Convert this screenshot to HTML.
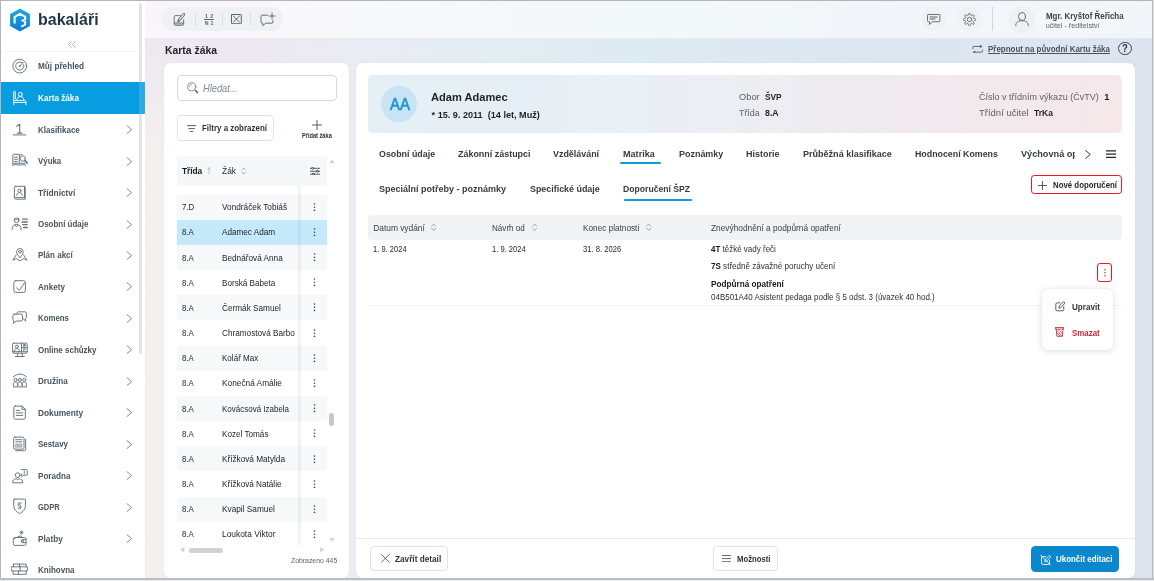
<!DOCTYPE html>
<html lang="cs"><head><meta charset="utf-8"><title>Karta žáka</title>
<style>
*{box-sizing:border-box;margin:0;padding:0}
html,body{width:1154px;height:581px;overflow:hidden}
body{font-family:"Liberation Sans",sans-serif;color:#2b2f33;font-size:11px;position:relative;background:#fff}
.abs{position:absolute}
.t{position:absolute;white-space:nowrap;line-height:0;transform-origin:0 50%}
.t>i{display:inline-block;width:0;height:20px}
.panel{position:absolute;background:#fff;border-radius:7px;box-shadow:0 0 2px rgba(120,120,160,.10)}
.btn{position:absolute;border:1px solid #dfe2e6;border-radius:4px;background:#fff}
</style></head><body>
<div id="root" style="position:absolute;left:0;top:0;width:1154px;height:581px;will-change:transform">

<div class="abs" style="left:145px;top:0px;width:1009.00px;height:581.00px;background:radial-gradient(ellipse 330px 150px at 0px 10px,rgba(235,230,242,.95),rgba(235,230,242,0)),linear-gradient(90deg,#f5efee 0%,#f1ebf0 10%,#e8eef4 21%,#ddebf2 48%,#dce7f1 70%,#dde4f0 100%);"></div>
<div class="abs" style="left:1px;top:1px;width:144.20px;height:578.00px;background:#fff;"></div>
<div class="abs" style="left:3px;top:51px;width:134.00px;height:0.80px;background:#f3f3f5;"></div>
<div class="abs" style="left:1px;top:82px;width:138.00px;height:31.70px;background:#079de0;"></div>
<div class="abs" style="left:139px;top:82px;width:6.20px;height:31.70px;background:#2fa9e3;"></div>
<svg class="abs" style="left:9.300px;top:7.500px;width:22px;height:24.300px" viewBox="0 0 22 25" preserveAspectRatio="none"><defs><linearGradient id="lg" x1="0" y1="0" x2="0" y2="1"><stop offset="0" stop-color="#25a8e6"/><stop offset="1" stop-color="#0a7ccf"/></linearGradient></defs><path d="M11 .6 L20.900 6.300 V18.500 L11 24.200 L1.100 18.500 V6.300 Z" fill="url(#lg)"/><path d="M5.600 16 V9.200 L11 6.100 L16.200 9 V11.600 L13.800 12.900 L16.200 14.200 V17 L12.300 19.200" fill="none" stroke="#fff" stroke-width="2" stroke-linejoin="miter" stroke-linecap="butt"/></svg>
<div class="t" style="left:37.70px;top:5.30px;font-size:17.1px;color:#1d3546;font-weight:bold;transform:scaleX(0.9375);"><i></i>bakaláři</div>
<svg class="abs" style="left:68.3px;top:40.9px;width:8px;height:7px" viewBox="0 0 8 7" fill="none" stroke="#9aa1a8" stroke-width="0.8" stroke-linecap="round" stroke-linejoin="round" ><path d="M3.300 .5 L.6 3.500 L3.300 6.500 M7.300 .5 L4.600 3.500 L7.300 6.500"/></svg>
<svg class="abs" style="left:11px;top:56.40px;width:18px;height:18px" viewBox="0 0 18 18" fill="none" stroke="#64727c" stroke-width=".95" stroke-linecap="round" stroke-linejoin="round"><circle cx="8.750" cy="10.100" r="6.900"/><path d="M11.400 6.850 A4.100 4.100 0 1 0 12.700 8.750"/><path d="M8.750 10.100 L12.300 6.550"/><circle cx="8.750" cy="10.100" r=".9" fill="#64727c" stroke="none"/></svg>
<div class="t" style="left:38.20px;top:49.40px;font-size:8.8px;color:#48545e;font-weight:bold;transform:scaleX(0.9315);"><i></i>Můj přehled</div>
<svg class="abs" style="left:11px;top:88.08px;width:18px;height:18px" viewBox="0 0 18 18" fill="none" stroke="#fff" stroke-width=".95" stroke-linecap="round" stroke-linejoin="round"><path d="M2.700 12.600 V4 a.8 .8 0 0 1 1.600 0 V11"/><circle cx="9.400" cy="6.300" r="2"/><path d="M5.900 12.400 c0-2.600 1.300-3.800 3.500-3.800 s3.500 1.200 3.500 3.800"/><path d="M2.700 16.700 V13.800 a1.200 1.200 0 0 1 1.200-1.200 H13.700 a1.200 1.200 0 0 1 1.200 1.200 V16.700 M2.700 14.500 H14.900"/></svg>
<div class="t" style="left:38.20px;top:81.08px;font-size:8.8px;color:#fff;font-weight:bold;transform:scaleX(0.9313);"><i></i>Karta žáka</div>
<svg class="abs" style="left:11px;top:119.56px;width:18px;height:18px" viewBox="0 0 18 18" fill="none" stroke="#64727c" stroke-width=".95" stroke-linecap="round" stroke-linejoin="round"><path d="M5.600 6.400 L8.700 4.100 V13 M6.300 13.100 H11" stroke-width="1.050"/><path d="M2.300 14.900 H14.900"/></svg>
<div class="t" style="left:38.20px;top:112.56px;font-size:8.8px;color:#48545e;font-weight:bold;transform:scaleX(0.9090);"><i></i>Klasifikace</div>
<svg class="abs" style="left:126.1px;top:125.06px;width:6.5px;height:9.2px" viewBox="0 0 6.500 9.200" fill="none" stroke="#717c86" stroke-width="0.9" stroke-linecap="round" stroke-linejoin="round" ><path d="M1 .7 L5.600 4.600 L1 8.500"/></svg>
<svg class="abs" style="left:11px;top:151.04px;width:18px;height:18px" viewBox="0 0 18 18" fill="none" stroke="#64727c" stroke-width=".95" stroke-linecap="round" stroke-linejoin="round"><path d="M1.900 12.700 V4.100 a.8 .8 0 0 1 .8-.8 H8.300 V12.700 M3.600 6.200 h2.800 M3.600 8.300 h2.800 M3.600 10.400 h2.800 M8.300 4.400 c.9-.7 1.800-1 2.900-.9 M1.900 12.700 c2.200-.8 4.200-.8 6.400 0 c1.700-.7 3.600-.8 5.600-.1 M1.500 14.300 c2.200-.9 4.600-.9 6.800 0 c2.200-.9 4.400-.9 6.400 0"/><circle cx="11.700" cy="7.500" r="2.700"/><path d="M13.800 9.600 L16.100 11.900" stroke-width="1.700"/></svg>
<div class="t" style="left:38.20px;top:144.04px;font-size:8.8px;color:#48545e;font-weight:bold;transform:scaleX(0.8948);"><i></i>Výuka</div>
<svg class="abs" style="left:126.1px;top:156.54px;width:6.5px;height:9.2px" viewBox="0 0 6.500 9.200" fill="none" stroke="#717c86" stroke-width="0.9" stroke-linecap="round" stroke-linejoin="round" ><path d="M1 .7 L5.600 4.600 L1 8.500"/></svg>
<svg class="abs" style="left:11px;top:182.52px;width:18px;height:18px" viewBox="0 0 18 18" fill="none" stroke="#64727c" stroke-width=".95" stroke-linecap="round" stroke-linejoin="round"><rect x="3.400" y="3.300" width="10.900" height="11.300" rx="1"/><path d="M3.400 13.200 v1.400 a1.600 1.600 0 0 0 1.600 1.600 H14.300 v-2 M13.500 3.500 v11"/><circle cx="8.500" cy="7.700" r="1.600"/><path d="M5.700 12.300 c0-1.900 1.200-2.700 2.800-2.700 s2.800 .8 2.800 2.700"/></svg>
<div class="t" style="left:38.20px;top:175.52px;font-size:8.8px;color:#48545e;font-weight:bold;transform:scaleX(0.9393);"><i></i>Třídnictví</div>
<svg class="abs" style="left:126.1px;top:188.02px;width:6.5px;height:9.2px" viewBox="0 0 6.500 9.200" fill="none" stroke="#717c86" stroke-width="0.9" stroke-linecap="round" stroke-linejoin="round" ><path d="M1 .7 L5.600 4.600 L1 8.500"/></svg>
<svg class="abs" style="left:11px;top:214.00px;width:18px;height:18px" viewBox="0 0 18 18" fill="none" stroke="#64727c" stroke-width=".95" stroke-linecap="round" stroke-linejoin="round"><circle cx="5.600" cy="6.300" r="2.400"/><path d="M3.300 5.700 c1.500 .3 3 0 4.500-1.200 M1.100 15.500 c0-3.400 1.600-5 4.500-5 s4.500 1.600 4.500 5 M4.100 10.900 l1.500 2 1.500-2"/><path d="M11.700 5.200 h4.500 M11 8 h5.200 M11.700 10.700 h4.500 M12.600 13.500 h3.600" stroke-width="1.300"/></svg>
<div class="t" style="left:38.20px;top:207.00px;font-size:8.8px;color:#48545e;font-weight:bold;transform:scaleX(0.9042);"><i></i>Osobní údaje</div>
<svg class="abs" style="left:126.1px;top:219.5px;width:6.5px;height:9.2px" viewBox="0 0 6.500 9.200" fill="none" stroke="#717c86" stroke-width="0.9" stroke-linecap="round" stroke-linejoin="round" ><path d="M1 .7 L5.600 4.600 L1 8.500"/></svg>
<svg class="abs" style="left:11px;top:245.48px;width:18px;height:18px" viewBox="0 0 18 18" fill="none" stroke="#64727c" stroke-width=".95" stroke-linecap="round" stroke-linejoin="round"><path d="M8.900 12.500 c-2.300-2.500-3.300-4.100-3.300-5.700 a3.300 3.300 0 0 1 6.600 0 c0 1.600-1 3.200-3.300 5.700z"/><circle cx="8.900" cy="6.700" r="1.300"/><path d="M5.200 9.900 L1.900 15.300 L5.200 13.600 L8.900 15.900 L12.600 13.600 L15.900 15.300 L12.600 9.900"/></svg>
<div class="t" style="left:38.20px;top:238.48px;font-size:8.8px;color:#48545e;font-weight:bold;transform:scaleX(0.9120);"><i></i>Plán akcí</div>
<svg class="abs" style="left:126.1px;top:250.98px;width:6.5px;height:9.2px" viewBox="0 0 6.500 9.200" fill="none" stroke="#717c86" stroke-width="0.9" stroke-linecap="round" stroke-linejoin="round" ><path d="M1 .7 L5.600 4.600 L1 8.500"/></svg>
<svg class="abs" style="left:11px;top:276.96px;width:18px;height:18px" viewBox="0 0 18 18" fill="none" stroke="#64727c" stroke-width=".95" stroke-linecap="round" stroke-linejoin="round"><rect x="2.800" y="3.700" width="11.600" height="11.700" rx="1.900"/><path d="M5.500 10.800 L8.300 13.300 L13.600 5.700"/></svg>
<div class="t" style="left:38.20px;top:269.96px;font-size:8.8px;color:#48545e;font-weight:bold;transform:scaleX(0.9167);"><i></i>Ankety</div>
<svg class="abs" style="left:126.1px;top:282.46px;width:6.5px;height:9.2px" viewBox="0 0 6.500 9.200" fill="none" stroke="#717c86" stroke-width="0.9" stroke-linecap="round" stroke-linejoin="round" ><path d="M1 .7 L5.600 4.600 L1 8.500"/></svg>
<svg class="abs" style="left:11px;top:308.44px;width:18px;height:18px" viewBox="0 0 18 18" fill="none" stroke="#64727c" stroke-width=".95" stroke-linecap="round" stroke-linejoin="round"><path d="M3.500 6.100 h6.400 a1.600 1.600 0 0 1 1.600 1.600 v3.700 a1.600 1.600 0 0 1 -1.600 1.600 h-4.800 l-2.600 2.400 .5-2.500 a1.600 1.600 0 0 1 -1.100-1.500 v-3.700 a1.600 1.600 0 0 1 1.600-1.600z"/><path d="M5.900 5.900 v-.5 a1.600 1.600 0 0 1 1.600-1.600 h6.300 a1.600 1.600 0 0 1 1.600 1.600 v3.700 a1.600 1.600 0 0 1 -1.100 1.500 l.4 2.400 -2.600-2.300 h-.5"/></svg>
<div class="t" style="left:38.20px;top:301.44px;font-size:8.8px;color:#48545e;font-weight:bold;transform:scaleX(0.8929);"><i></i>Komens</div>
<svg class="abs" style="left:126.1px;top:313.94px;width:6.5px;height:9.2px" viewBox="0 0 6.500 9.200" fill="none" stroke="#717c86" stroke-width="0.9" stroke-linecap="round" stroke-linejoin="round" ><path d="M1 .7 L5.600 4.600 L1 8.500"/></svg>
<svg class="abs" style="left:11px;top:339.92px;width:18px;height:18px" viewBox="0 0 18 18" fill="none" stroke="#64727c" stroke-width=".95" stroke-linecap="round" stroke-linejoin="round"><rect x="1.600" y="3.200" width="14.600" height="10" rx="1"/><path d="M1.600 11.700 H16.200 M6.900 13.200 l-.7 3.300 M10.900 13.200 l.7 3.300 M4.400 16.500 h9 M10.500 3.200 V11.700 M10.500 7.600 H16.200"/><circle cx="5.900" cy="6.600" r="1.500"/><path d="M3.400 11.600 c0-2.100 1-3 2.500-3 s2.500 .9 2.500 3 M12.900 4.600 v2 M12.900 4.600 h1.600 v1.200 h-1.600 M12.900 9 v1.700 M12.900 9 h1.600"/></svg>
<div class="t" style="left:38.20px;top:332.92px;font-size:8.8px;color:#48545e;font-weight:bold;transform:scaleX(0.9062);"><i></i>Online schůzky</div>
<svg class="abs" style="left:126.1px;top:345.42px;width:6.5px;height:9.2px" viewBox="0 0 6.500 9.200" fill="none" stroke="#717c86" stroke-width="0.9" stroke-linecap="round" stroke-linejoin="round" ><path d="M1 .7 L5.600 4.600 L1 8.500"/></svg>
<svg class="abs" style="left:11px;top:371.40px;width:18px;height:18px" viewBox="0 0 18 18" fill="none" stroke="#64727c" stroke-width=".95" stroke-linecap="round" stroke-linejoin="round"><path d="M2.300 5.800 Q8.900 -.1 15.500 5.800"/><circle cx="4.500" cy="8.800" r="1.500"/><circle cx="8.900" cy="8.800" r="1.500"/><circle cx="13.300" cy="8.800" r="1.500"/><path d="M2.400 14.800 v-1.700 c0-1.500 .9-2.200 2.100-2.200 s2.100 .7 2.100 2.200 v1.700 M6.800 14.800 v-1.700 c0-1.500 .9-2.200 2.100-2.200 s2.100 .7 2.100 2.200 v1.700 M11.200 14.800 v-1.700 c0-1.500 .9-2.200 2.100-2.200 s2.100 .7 2.100 2.200 v1.700 M2.300 15.900 H15.500"/></svg>
<div class="t" style="left:38.20px;top:364.40px;font-size:8.8px;color:#48545e;font-weight:bold;transform:scaleX(0.9200);"><i></i>Družina</div>
<svg class="abs" style="left:126.1px;top:376.9px;width:6.5px;height:9.2px" viewBox="0 0 6.500 9.200" fill="none" stroke="#717c86" stroke-width="0.9" stroke-linecap="round" stroke-linejoin="round" ><path d="M1 .7 L5.600 4.600 L1 8.500"/></svg>
<svg class="abs" style="left:11px;top:402.88px;width:18px;height:18px" viewBox="0 0 18 18" fill="none" stroke="#64727c" stroke-width=".95" stroke-linecap="round" stroke-linejoin="round"><path d="M4.300 3.100 h6.700 l3.300 3.300 v8.300 a1.500 1.500 0 0 1 -1.500 1.500 h-8.500 a1.500 1.500 0 0 1 -1.500-1.500 v-10.100 a1.500 1.500 0 0 1 1.500-1.500z M11 3.100 v3.300 h3.300 M5.200 7.400 h3.500 M5.200 9.900 h6.600 M5.200 12.400 h6.600"/></svg>
<div class="t" style="left:38.20px;top:395.88px;font-size:8.8px;color:#48545e;font-weight:bold;transform:scaleX(0.9432);"><i></i>Dokumenty</div>
<svg class="abs" style="left:126.1px;top:408.38px;width:6.5px;height:9.2px" viewBox="0 0 6.500 9.200" fill="none" stroke="#717c86" stroke-width="0.9" stroke-linecap="round" stroke-linejoin="round" ><path d="M1 .7 L5.600 4.600 L1 8.500"/></svg>
<svg class="abs" style="left:11px;top:434.36px;width:18px;height:18px" viewBox="0 0 18 18" fill="none" stroke="#64727c" stroke-width=".95" stroke-linecap="round" stroke-linejoin="round"><rect x="2.700" y="3.100" width="10.300" height="12.100" rx="1.300"/><path d="M14.700 5.300 v10.100 a1.300 1.300 0 0 1 -1.300 1.300 h-8.600 M4.800 5.700 h2.600 M8.300 5.700 h2.600 M4.800 7.800 h2.600 M8.300 7.800 h2.600"/><path d="M4.900 10 h2.400 v3.200 h-2.400z M8.400 10 h2.400 v3.200 h-2.400z" fill="#64727c" fill-opacity=".35" stroke-width=".5"/></svg>
<div class="t" style="left:38.20px;top:427.36px;font-size:8.8px;color:#48545e;font-weight:bold;transform:scaleX(0.9017);"><i></i>Sestavy</div>
<svg class="abs" style="left:126.1px;top:439.86px;width:6.5px;height:9.2px" viewBox="0 0 6.500 9.200" fill="none" stroke="#717c86" stroke-width="0.9" stroke-linecap="round" stroke-linejoin="round" ><path d="M1 .7 L5.600 4.600 L1 8.500"/></svg>
<svg class="abs" style="left:11px;top:465.84px;width:18px;height:18px" viewBox="0 0 18 18" fill="none" stroke="#64727c" stroke-width=".95" stroke-linecap="round" stroke-linejoin="round"><circle cx="6.700" cy="9.200" r="2.400"/><path d="M1.600 16.400 c0-2.300 1.200-3.300 3.500-3.600 l1.600 .8 1.600-.8 c2.300 .3 3.500 1.300 3.500 3.600z M10.300 3.500 h5 a1 1 0 0 1 1 1 v3.700 a1 1 0 0 1 -1 1 h-2.600 l-1.900 1.500 v-2.800 M13.300 5 v1.700 M13.300 7.800 v.1"/></svg>
<div class="t" style="left:38.20px;top:458.84px;font-size:8.8px;color:#48545e;font-weight:bold;transform:scaleX(0.9202);"><i></i>Poradna</div>
<svg class="abs" style="left:126.1px;top:471.34px;width:6.5px;height:9.2px" viewBox="0 0 6.500 9.200" fill="none" stroke="#717c86" stroke-width="0.9" stroke-linecap="round" stroke-linejoin="round" ><path d="M1 .7 L5.600 4.600 L1 8.500"/></svg>
<svg class="abs" style="left:11px;top:497.32px;width:18px;height:18px" viewBox="0 0 18 18" fill="none" stroke="#64727c" stroke-width=".95" stroke-linecap="round" stroke-linejoin="round"><path d="M3.400 2.100 h10.400 a.7 .7 0 0 1 .7 .7 v5.700 c0 3.900-2.500 6.300-5.900 8.100 c-3.400-1.800-5.900-4.200-5.900-8.100 v-5.700 a.7 .7 0 0 1 .7-.7z"/><path d="M10.200 6.300 c-.3-1.100-2.900-1.200-2.900 .3 c0 1.700 3 1.300 3 3 c0 1.100-1.500 1.400-2.400 .8 M7 11.100 c.3 1.100 2.900 1.200 2.900-.3 c0-1.700-3-1.300-3-3 c0-1.100 1.500-1.400 2.400-.8" stroke-width=".8"/></svg>
<div class="t" style="left:38.20px;top:490.32px;font-size:8.8px;color:#48545e;font-weight:bold;transform:scaleX(0.8535);"><i></i>GDPR</div>
<svg class="abs" style="left:126.1px;top:502.82px;width:6.5px;height:9.2px" viewBox="0 0 6.500 9.200" fill="none" stroke="#717c86" stroke-width="0.9" stroke-linecap="round" stroke-linejoin="round" ><path d="M1 .7 L5.600 4.600 L1 8.500"/></svg>
<svg class="abs" style="left:11px;top:528.80px;width:18px;height:18px" viewBox="0 0 18 18" fill="none" stroke="#64727c" stroke-width=".95" stroke-linecap="round" stroke-linejoin="round"><path d="M2.300 10.200 a1.700 1.700 0 0 1 1.700-1.700 h9.500 a1.500 1.500 0 0 1 1.500 1.500 v4.900 a1.500 1.500 0 0 1 -1.500 1.500 h-9.700 a1.500 1.500 0 0 1 -1.500-1.500z M2.500 9.600 L9.800 6.800 l1.200 1.700 M15 10.500 h-3.200 a1.600 1.600 0 0 0 0 3.200 h3.200"/><circle cx="11.900" cy="12.100" r=".5"/><path d="M10.500 1.800 v3.400 M8.800 3.500 h3.400 M9.300 2.300 l2.400 2.400 M11.700 2.300 l-2.400 2.400" stroke-width=".7"/></svg>
<div class="t" style="left:38.20px;top:521.80px;font-size:8.8px;color:#48545e;font-weight:bold;transform:scaleX(0.9391);"><i></i>Platby</div>
<svg class="abs" style="left:126.1px;top:534.3px;width:6.5px;height:9.2px" viewBox="0 0 6.500 9.200" fill="none" stroke="#717c86" stroke-width="0.9" stroke-linecap="round" stroke-linejoin="round" ><path d="M1 .7 L5.600 4.600 L1 8.500"/></svg>
<svg class="abs" style="left:11px;top:560.28px;width:18px;height:18px" viewBox="0 0 18 18" fill="none" stroke="#64727c" stroke-width=".95" stroke-linecap="round" stroke-linejoin="round"><path d="M2.500 4.100 H15.200 V6.800 M2.500 4.100 V6.800 M8.500 4.100 V6.800 M.8 6.800 H16.100 L16.600 8.900 L16.100 11 H.8 L.3 8.900z M9.200 6.800 V11 M2.100 11 V14.300 H15.200 V11 M7.400 11 V14.300"/></svg>
<div class="t" style="left:38.20px;top:553.28px;font-size:8.8px;color:#48545e;font-weight:bold;transform:scaleX(0.9104);"><i></i>Knihovna</div>
<div class="abs" style="left:139.1px;top:3px;width:3.20px;height:79.00px;background:#e2e3e5;border-radius:1.600px 1.600px 0 0"></div>
<div class="abs" style="left:139.1px;top:113.7px;width:3.20px;height:240.30px;background:#e2e3e5;border-radius:0 0 1.600px 1.600px"></div>
<div class="abs" style="left:145.2px;top:1px;width:1006.80px;height:37.60px;background:rgba(255,255,255,.64);border-bottom:1px solid rgba(214,220,230,.55)"></div>
<div class="abs" style="left:161.7px;top:6.9px;width:121.50px;height:24.50px;background:#f0f1f4;border-radius:12.500px"></div>
<svg class="abs" style="left:172.5px;top:12px;width:13px;height:14.8px" viewBox="0 0 14 16" fill="none" stroke="#5d656c" stroke-width="0.95" stroke-linecap="round" stroke-linejoin="round" ><path d="M7.800 3.900 H2.500 a1.200 1.200 0 0 0 -1.200 1.200 V13.200 a1.200 1.200 0 0 0 1.200 1.200 H10.300 a1.200 1.200 0 0 0 1.200-1.200 V8.300 M1.300 11.900 H11.500"/><path d="M1.800 12.400 H11 V13.900 H1.800z" fill="#5d656c" fill-opacity=".45" stroke="none"/><path d="M6.400 8.900 L11.700 2.600" stroke-width="3" stroke-linecap="round"/><path d="M6.400 8.900 L11.700 2.600" stroke="#f1f2f5" stroke-width="1.200" stroke-linecap="round"/><path d="M4.900 10.500 l.5-2 1.500 1.400z" fill="#5d656c" stroke-width=".5"/></svg>
<div class="abs" style="left:195px;top:11.5px;width:0.80px;height:14.50px;background:#dcdfe4;"></div>
<div class="t" style="left:204.90px;top:-1.90px;font-size:5.3px;color:#5d656c;font-weight:bold;letter-spacing:2.4px;"><i></i>12</div>
<div class="abs" style="left:203.6px;top:19px;width:10.40px;height:0.80px;background:#5d656c;"></div>
<div class="t" style="left:204.70px;top:4.90px;font-size:5.3px;color:#5d656c;font-weight:bold;letter-spacing:1.9px;"><i></i>N1</div>
<div class="abs" style="left:222.2px;top:11.5px;width:0.80px;height:14.50px;background:#dcdfe4;"></div>
<svg class="abs" style="left:231px;top:13.8px;width:10.8px;height:10.2px" viewBox="0 0 10.800 10.200" fill="none" stroke="#5d656c" stroke-width="1" stroke-linecap="round" stroke-linejoin="round" ><rect x=".5" y=".5" width="9.800" height="9.200" rx=".4"/><path d="M2.300 2.100 L8.500 8.100 M8.500 2.100 L2.300 8.100"/></svg>
<div class="abs" style="left:250.1px;top:11.5px;width:0.80px;height:14.50px;background:#dcdfe4;"></div>
<svg class="abs" style="left:259.5px;top:11.5px;width:16px;height:15px" viewBox="0 0 16 15" fill="none" stroke="#5d656c" stroke-width="0.95" stroke-linecap="round" stroke-linejoin="round" ><path d="M7.500 3.200 H2.200 a1.200 1.200 0 0 0 -1.200 1.200 v5.600 a1.200 1.200 0 0 0 1.200 1.200 h.6 v2.500 l2.900-2.500 h6.100 a1.200 1.200 0 0 0 1.200-1.200 V8.500 M12 1 v6 M9 4 h6"/></svg>
<div class="abs" style="left:922px;top:6.6px;width:24.20px;height:24.20px;background:#f0f1f3;border-radius:13px"></div>
<svg class="abs" style="left:927.3px;top:13.9px;width:13.4px;height:11px" viewBox="0 0 13.400 11" fill="none" stroke="#5d656c" stroke-width="0.9" stroke-linecap="round" stroke-linejoin="round" ><path d="M1.300 .5 h10.800 a.8 .8 0 0 1 .8 .8 v5.600 a.8 .8 0 0 1 -.8 .8 h-6.600 l-3 2.800 v-2.800 h-1.200 a.8 .8 0 0 1 -.8-.8 v-5.600 a.8 .8 0 0 1 .8-.8z"/><path d="M3 3 h7.200 M3 5 h5" stroke-width="1.200"/></svg>
<div class="abs" style="left:956.8px;top:6.6px;width:24.60px;height:24.20px;background:#f0f1f3;border-radius:13px"></div>
<svg class="abs" style="left:962.8px;top:12.7px;width:13px;height:13px" viewBox="0 0 13 13" fill="none" stroke="#5d656c" stroke-width="0.9" stroke-linecap="round" stroke-linejoin="round" ><circle cx="6.500" cy="6.500" r="2.200"/><path d="M6.50 0.30 L6.91 0.31 L7.28 0.54 L7.52 1.35 L7.66 2.16 L7.88 2.43 L8.15 2.53 L8.40 2.64 L8.74 2.61 L9.42 2.13 L10.16 1.73 L10.59 1.84 L10.88 2.12 L11.16 2.41 L11.27 2.84 L10.87 3.58 L10.39 4.25 L10.36 4.60 L10.47 4.85 L10.57 5.12 L10.84 5.34 L11.65 5.48 L12.46 5.72 L12.69 6.09 L12.70 6.50 L12.69 6.91 L12.46 7.28 L11.65 7.52 L10.84 7.66 L10.57 7.88 L10.47 8.15 L10.36 8.40 L10.39 8.74 L10.87 9.42 L11.27 10.16 L11.16 10.59 L10.88 10.88 L10.59 11.16 L10.16 11.27 L9.42 10.87 L8.74 10.39 L8.40 10.36 L8.15 10.47 L7.88 10.57 L7.66 10.84 L7.52 11.65 L7.28 12.46 L6.91 12.69 L6.50 12.70 L6.09 12.69 L5.72 12.46 L5.48 11.65 L5.34 10.84 L5.12 10.57 L4.85 10.47 L4.60 10.36 L4.26 10.39 L3.58 10.87 L2.84 11.27 L2.41 11.16 L2.12 10.88 L1.84 10.59 L1.73 10.16 L2.13 9.42 L2.61 8.75 L2.64 8.40 L2.53 8.15 L2.43 7.88 L2.16 7.66 L1.35 7.52 L0.54 7.28 L0.31 6.91 L0.30 6.50 L0.31 6.09 L0.54 5.72 L1.35 5.48 L2.16 5.34 L2.43 5.12 L2.53 4.85 L2.64 4.60 L2.61 4.25 L2.13 3.58 L1.73 2.84 L1.84 2.41 L2.12 2.12 L2.41 1.84 L2.84 1.73 L3.58 2.13 L4.25 2.61 L4.60 2.64 L4.85 2.53 L5.12 2.43 L5.34 2.16 L5.48 1.35 L5.72 0.54 L6.09 0.31z"/></svg>
<div class="abs" style="left:991.6px;top:6.6px;width:0.90px;height:24.90px;background:#d3d7dc;"></div>
<div class="abs" style="left:1009px;top:5.5px;width:26.40px;height:27.10px;background:#eff0f2;border-radius:14px"></div>
<svg class="abs" style="left:1014.9px;top:12.1px;width:14px;height:14px" viewBox="0 0 14 14" fill="none" stroke="#5d656c" stroke-width="0.95" stroke-linecap="round" stroke-linejoin="round" ><ellipse cx="7" cy="4.500" rx="3.500" ry="3.900"/><path d="M.7 13.700 c0-3.600 2.700-5 6.300-5 s6.300 1.400 6.300 5"/></svg>
<div class="t" style="left:1045.70px;top:-0.70px;font-size:9.2px;color:#3c4348;font-weight:bold;transform:scaleX(0.8635);"><i></i>Mgr. Kryštof Řeřicha</div>
<div class="t" style="left:1045.70px;top:8.20px;font-size:7.2px;color:#5b6369;"><i></i>učitel - ředitelství</div>
<div class="t" style="left:164.50px;top:33.70px;font-size:10.5px;color:#1e2226;font-weight:bold;transform:scaleX(0.9899);"><i></i>Karta žáka</div>
<svg class="abs" style="left:971.8px;top:44.5px;width:11.4px;height:8.6px" viewBox="0 0 11 8.500" fill="none" stroke="#4f575d" stroke-width="0.85" stroke-linecap="round" stroke-linejoin="round" ><path d="M.6 3.500 v-.8 a1.300 1.300 0 0 1 1.300-1.300 h7.600 M8 .4 l1.700 1 -1.700 1 M10.400 5 v.8 a1.300 1.300 0 0 1 -1.300 1.300 h-7.600 M3 6.100 l-1.700 1 1.700 1"/></svg>
<div class="t" style="left:988.00px;top:31.60px;font-size:8.6px;color:#4a5258;font-weight:bold;transform:scaleX(0.9251);text-decoration:underline;text-decoration-thickness:.7px;text-underline-offset:.6px"><i></i>Přepnout na původní Kartu žáka</div>
<div class="abs" style="left:1117.900px;top:41.600px;width:13.800px;height:13.800px;border-radius:7px;border:1px solid #3a4046"></div>
<div class="t" style="left:1121.90px;top:32.40px;font-size:10.3px;color:#2e3338;font-weight:bold;transform:scaleX(0.9218);"><i></i>?</div>
<div class="panel" style="left:164.300px;top:62.500px;width:184.800px;height:515.300px"></div>
<div class="abs" style="left:177px;top:75px;width:160px;height:25.500px;border:1px solid #d5d9dd;border-radius:4px;background:#fff"></div>
<svg class="abs" style="left:186.5px;top:82.3px;width:11.5px;height:11.5px" viewBox="0 0 11.500 11.500" fill="none" stroke="#656d74" stroke-width="0.8" stroke-linecap="round" stroke-linejoin="round" ><circle cx="4.800" cy="4.800" r="4.100"/><path d="M2.500 4.300 a2.400 2.400 0 0 1 1.900-1.700" stroke-width=".7"/><path d="M7.700 7.700 L8.600 8.600"/><path d="M8.600 8.600 L10.600 10.600" stroke-width="1.700"/></svg>
<div class="t" style="left:203.00px;top:72.00px;font-size:10.4px;color:#7c878f;font-style:italic;transform:scaleX(0.8908);"><i></i>Hledat...</div>
<div class="btn" style="left:177px;top:115.300px;width:96.700px;height:25.400px"></div>
<svg class="abs" style="left:186.9px;top:124.8px;width:9.3px;height:7.2px" viewBox="0 0 9 7.200" fill="none" stroke="#3a4046" stroke-width="0.85" stroke-linecap="round" stroke-linejoin="round" ><path d="M.4 .6 h8.200 M1.700 3.600 h5.600 M3.200 6.600 h2.600"/></svg>
<div class="t" style="left:201.70px;top:111.10px;font-size:9.1px;color:#2e3338;font-weight:bold;transform:scaleX(0.8744);"><i></i>Filtry a zobrazení</div>
<svg class="abs" style="left:312px;top:119.6px;width:10px;height:10px" viewBox="0 0 10 10" fill="none" stroke="#2e3338" stroke-width="0.8" stroke-linecap="round" stroke-linejoin="round" ><path d="M5 .3 v9.400 M.3 5 h9.400"/></svg>
<div class="t" style="left:302.10px;top:117.60px;font-size:6.3px;color:#2e3338;font-weight:bold;transform:scaleX(0.8958);"><i></i>Přidat žáka</div>
<div class="abs" style="left:177px;top:156.2px;width:150.20px;height:29.50px;background:#f6f7f9;"></div>
<div class="t" style="left:181.80px;top:154.20px;font-size:9.3px;color:#15191c;font-weight:bold;transform:scaleX(0.8884);"><i></i>Třída</div>
<svg class="abs" style="left:206.8px;top:167.3px;width:4px;height:7.4px" viewBox="0 0 4 7.400" fill="none" stroke="#a3aab0" stroke-width="0.7" stroke-linecap="round" stroke-linejoin="round" ><path d="M2 .8 v6 M1 1.900 L2 .8 L3 1.900"/></svg>
<div class="t" style="left:222.20px;top:154.20px;font-size:9.3px;color:#262b30;transform:scaleX(0.9030);"><i></i>Žák</div>
<svg class="abs" style="left:240.6px;top:166.8px;width:5.2px;height:8px" viewBox="0 0 5.400 8.400" fill="none" stroke="#858d94" stroke-width="0.7" stroke-linecap="round" stroke-linejoin="round" ><path d="M.7 3.200 L2.700 .9 L4.700 3.200 M.7 5.200 L2.700 7.500 L4.700 5.200"/></svg>
<svg class="abs" style="left:309.5px;top:166.5px;width:10px;height:8.5px" viewBox="0 0 10 8.500" fill="none" stroke="#3a4046" stroke-width="0.85" stroke-linecap="round" stroke-linejoin="round" ><path d="M.4 1.300 h9.200 M.4 4.250 h9.200 M.4 7.200 h9.200"/><circle cx="2.600" cy="1.300" r="1" fill="#f6f7f9"/><circle cx="7.400" cy="4.250" r="1" fill="#f6f7f9"/><circle cx="3.400" cy="7.200" r="1" fill="#f6f7f9"/></svg>
<div class="abs" style="left:177px;top:194.5px;width:150.20px;height:25.17px;background:#f7f8fa;"></div>
<div class="t" style="left:181.90px;top:190.20px;font-size:9.1px;color:#1c2024;transform:scaleX(0.8686);"><i></i>7.D</div>
<div class="t" style="left:221.90px;top:190.20px;font-size:9.1px;color:#1c2024;transform:scaleX(0.9083);"><i></i>Vondráček Tobiáš</div>
<svg class="abs" style="left:312.500px;top:202.80px;width:3px;height:8.400px" viewBox="0 0 3 8.400" fill="#3a4046"><circle cx="1.500" cy="1" r=".8"/><circle cx="1.500" cy="4.200" r=".8"/><circle cx="1.500" cy="7.400" r=".8"/></svg>
<div class="abs" style="left:177px;top:219.67px;width:150.20px;height:25.17px;background:#c3e9fa;"></div>
<div class="t" style="left:181.90px;top:215.37px;font-size:9.1px;color:#1c2024;transform:scaleX(0.8639);"><i></i>8.A</div>
<div class="t" style="left:221.90px;top:215.37px;font-size:9.1px;color:#1c2024;transform:scaleX(0.8972);"><i></i>Adamec Adam</div>
<svg class="abs" style="left:312.500px;top:227.97px;width:3px;height:8.400px" viewBox="0 0 3 8.400" fill="#3a4046"><circle cx="1.500" cy="1" r=".8"/><circle cx="1.500" cy="4.200" r=".8"/><circle cx="1.500" cy="7.400" r=".8"/></svg>
<div class="abs" style="left:177px;top:244.84px;width:150.20px;height:25.17px;background:#f7f8fa;"></div>
<div class="t" style="left:181.90px;top:240.54px;font-size:9.1px;color:#1c2024;transform:scaleX(0.8639);"><i></i>8.A</div>
<div class="t" style="left:221.90px;top:240.54px;font-size:9.1px;color:#1c2024;transform:scaleX(0.9035);"><i></i>Bednářová Anna</div>
<svg class="abs" style="left:312.500px;top:253.14px;width:3px;height:8.400px" viewBox="0 0 3 8.400" fill="#3a4046"><circle cx="1.500" cy="1" r=".8"/><circle cx="1.500" cy="4.200" r=".8"/><circle cx="1.500" cy="7.400" r=".8"/></svg>
<div class="t" style="left:181.90px;top:265.71px;font-size:9.1px;color:#1c2024;transform:scaleX(0.8639);"><i></i>8.A</div>
<div class="t" style="left:221.90px;top:265.71px;font-size:9.1px;color:#1c2024;transform:scaleX(0.8946);"><i></i>Borská Babeta</div>
<svg class="abs" style="left:312.500px;top:278.31px;width:3px;height:8.400px" viewBox="0 0 3 8.400" fill="#3a4046"><circle cx="1.500" cy="1" r=".8"/><circle cx="1.500" cy="4.200" r=".8"/><circle cx="1.500" cy="7.400" r=".8"/></svg>
<div class="abs" style="left:177px;top:295.18px;width:150.20px;height:25.17px;background:#f7f8fa;"></div>
<div class="t" style="left:181.90px;top:290.88px;font-size:9.1px;color:#1c2024;transform:scaleX(0.8639);"><i></i>8.A</div>
<div class="t" style="left:221.90px;top:290.88px;font-size:9.1px;color:#1c2024;transform:scaleX(0.9028);"><i></i>Čermák Samuel</div>
<svg class="abs" style="left:312.500px;top:303.48px;width:3px;height:8.400px" viewBox="0 0 3 8.400" fill="#3a4046"><circle cx="1.500" cy="1" r=".8"/><circle cx="1.500" cy="4.200" r=".8"/><circle cx="1.500" cy="7.400" r=".8"/></svg>
<div class="t" style="left:181.90px;top:316.05px;font-size:9.1px;color:#1c2024;transform:scaleX(0.8639);"><i></i>8.A</div>
<div class="t" style="left:221.90px;top:316.05px;font-size:9.1px;color:#1c2024;transform:scaleX(0.9008);"><i></i>Chramostová Barbo</div>
<svg class="abs" style="left:312.500px;top:328.65px;width:3px;height:8.400px" viewBox="0 0 3 8.400" fill="#3a4046"><circle cx="1.500" cy="1" r=".8"/><circle cx="1.500" cy="4.200" r=".8"/><circle cx="1.500" cy="7.400" r=".8"/></svg>
<div class="abs" style="left:177px;top:345.52px;width:150.20px;height:25.17px;background:#f7f8fa;"></div>
<div class="t" style="left:181.90px;top:341.22px;font-size:9.1px;color:#1c2024;transform:scaleX(0.8639);"><i></i>8.A</div>
<div class="t" style="left:221.90px;top:341.22px;font-size:9.1px;color:#1c2024;transform:scaleX(0.8861);"><i></i>Kolář Max</div>
<svg class="abs" style="left:312.500px;top:353.82px;width:3px;height:8.400px" viewBox="0 0 3 8.400" fill="#3a4046"><circle cx="1.500" cy="1" r=".8"/><circle cx="1.500" cy="4.200" r=".8"/><circle cx="1.500" cy="7.400" r=".8"/></svg>
<div class="t" style="left:181.90px;top:366.39px;font-size:9.1px;color:#1c2024;transform:scaleX(0.8639);"><i></i>8.A</div>
<div class="t" style="left:221.90px;top:366.39px;font-size:9.1px;color:#1c2024;transform:scaleX(0.9123);"><i></i>Konečná Amálie</div>
<svg class="abs" style="left:312.500px;top:378.99px;width:3px;height:8.400px" viewBox="0 0 3 8.400" fill="#3a4046"><circle cx="1.500" cy="1" r=".8"/><circle cx="1.500" cy="4.200" r=".8"/><circle cx="1.500" cy="7.400" r=".8"/></svg>
<div class="abs" style="left:177px;top:395.86px;width:150.20px;height:25.17px;background:#f7f8fa;"></div>
<div class="t" style="left:181.90px;top:391.56px;font-size:9.1px;color:#1c2024;transform:scaleX(0.8639);"><i></i>8.A</div>
<div class="t" style="left:221.90px;top:391.56px;font-size:9.1px;color:#1c2024;transform:scaleX(0.8784);"><i></i>Kovácsová Izabela</div>
<svg class="abs" style="left:312.500px;top:404.16px;width:3px;height:8.400px" viewBox="0 0 3 8.400" fill="#3a4046"><circle cx="1.500" cy="1" r=".8"/><circle cx="1.500" cy="4.200" r=".8"/><circle cx="1.500" cy="7.400" r=".8"/></svg>
<div class="t" style="left:181.90px;top:416.73px;font-size:9.1px;color:#1c2024;transform:scaleX(0.8639);"><i></i>8.A</div>
<div class="t" style="left:221.90px;top:416.73px;font-size:9.1px;color:#1c2024;transform:scaleX(0.8954);"><i></i>Kozel Tomás</div>
<svg class="abs" style="left:312.500px;top:429.33px;width:3px;height:8.400px" viewBox="0 0 3 8.400" fill="#3a4046"><circle cx="1.500" cy="1" r=".8"/><circle cx="1.500" cy="4.200" r=".8"/><circle cx="1.500" cy="7.400" r=".8"/></svg>
<div class="abs" style="left:177px;top:446.2px;width:150.20px;height:25.17px;background:#f7f8fa;"></div>
<div class="t" style="left:181.90px;top:441.90px;font-size:9.1px;color:#1c2024;transform:scaleX(0.8639);"><i></i>8.A</div>
<div class="t" style="left:221.90px;top:441.90px;font-size:9.1px;color:#1c2024;transform:scaleX(0.9027);"><i></i>Křížková Matylda</div>
<svg class="abs" style="left:312.500px;top:454.50px;width:3px;height:8.400px" viewBox="0 0 3 8.400" fill="#3a4046"><circle cx="1.500" cy="1" r=".8"/><circle cx="1.500" cy="4.200" r=".8"/><circle cx="1.500" cy="7.400" r=".8"/></svg>
<div class="t" style="left:181.90px;top:467.07px;font-size:9.1px;color:#1c2024;transform:scaleX(0.8639);"><i></i>8.A</div>
<div class="t" style="left:221.90px;top:467.07px;font-size:9.1px;color:#1c2024;transform:scaleX(0.8995);"><i></i>Křížková Natálie</div>
<svg class="abs" style="left:312.500px;top:479.67px;width:3px;height:8.400px" viewBox="0 0 3 8.400" fill="#3a4046"><circle cx="1.500" cy="1" r=".8"/><circle cx="1.500" cy="4.200" r=".8"/><circle cx="1.500" cy="7.400" r=".8"/></svg>
<div class="abs" style="left:177px;top:496.54px;width:150.20px;height:25.17px;background:#f7f8fa;"></div>
<div class="t" style="left:181.90px;top:492.24px;font-size:9.1px;color:#1c2024;transform:scaleX(0.8639);"><i></i>8.A</div>
<div class="t" style="left:221.90px;top:492.24px;font-size:9.1px;color:#1c2024;transform:scaleX(0.9094);"><i></i>Kvapil Samuel</div>
<svg class="abs" style="left:312.500px;top:504.84px;width:3px;height:8.400px" viewBox="0 0 3 8.400" fill="#3a4046"><circle cx="1.500" cy="1" r=".8"/><circle cx="1.500" cy="4.200" r=".8"/><circle cx="1.500" cy="7.400" r=".8"/></svg>
<div class="t" style="left:181.90px;top:517.41px;font-size:9.1px;color:#1c2024;transform:scaleX(0.8639);"><i></i>8.A</div>
<div class="t" style="left:221.90px;top:517.41px;font-size:9.1px;color:#1c2024;transform:scaleX(0.9223);"><i></i>Loukota Viktor</div>
<svg class="abs" style="left:312.500px;top:530.01px;width:3px;height:8.400px" viewBox="0 0 3 8.400" fill="#3a4046"><circle cx="1.500" cy="1" r=".8"/><circle cx="1.500" cy="4.200" r=".8"/><circle cx="1.500" cy="7.400" r=".8"/></svg>
<div class="abs" style="left:297.3px;top:185.7px;width:3.00px;height:359.30px;background:linear-gradient(90deg,rgba(130,140,150,0),rgba(130,140,150,.16));"></div>
<div class="abs" style="left:300.3px;top:185.7px;width:0.60px;height:359.30px;background:rgba(160,168,176,.10);"></div>
<svg class="abs" style="left:329px;top:159px;width:5.700px;height:4.200px" viewBox="0 0 6 4"><path d="M3 .2 L5.900 3.900 H.1z" fill="#cfd1d4"/></svg>
<div class="abs" style="left:329.3px;top:412.5px;width:5.00px;height:13.00px;background:#c6c8cb;border-radius:2.500px"></div>
<svg class="abs" style="left:329px;top:537.500px;width:5.700px;height:4.200px" viewBox="0 0 6 4"><path d="M3 3.800 L5.900 .1 H.1z" fill="#cfd1d4"/></svg>
<svg class="abs" style="left:180px;top:547.200px;width:4.500px;height:5.600px" viewBox="0 0 4.500 5.600"><path d="M.2 2.800 L4.300 .1 V5.500z" fill="#cfd1d4"/></svg>
<div class="abs" style="left:188.5px;top:547.5px;width:34.00px;height:5.20px;background:#d0d2d5;border-radius:2.600px"></div>
<svg class="abs" style="left:319.500px;top:547.200px;width:4.500px;height:5.600px" viewBox="0 0 4.500 5.600"><path d="M4.300 2.800 L.2 .1 V5.500z" fill="#cfd1d4"/></svg>
<div class="t" style="left:290.50px;top:543.00px;font-size:7px;color:#5b6369;transform:scaleX(0.9811);"><i></i>Zobrazeno 445</div>
<div class="panel" style="left:355.600px;top:62.500px;width:779.100px;height:515.300px"></div>
<div class="abs" style="left:368px;top:75px;width:753.50px;height:57.50px;background:linear-gradient(90deg,#e4eff6 0%,#e7eff5 25%,#ebeef4 45%,#efebf0 65%,#f3e8ec 85%,#f5e7ea 100%);border-radius:5px"></div>
<div class="abs" style="left:381.3px;top:86.1px;width:36.10px;height:36.10px;background:#c8e4f4;border-radius:19px"></div>
<div class="t" style="left:389.80px;top:90.30px;font-size:15.8px;color:#1a93d6;transform:scaleX(0.9394);-webkit-text-stroke:.6px #1a93d6"><i></i>AA</div>
<div class="t" style="left:431.30px;top:81.10px;font-size:11.6px;color:#1e2226;font-weight:bold;transform:scaleX(0.9569);"><i></i>Adam Adamec</div>
<div class="t" style="left:431.60px;top:97.60px;font-size:9.1px;color:#1e2226;font-weight:bold;"><i></i>* 15. 9. 2011&nbsp; (14 let, Muž)</div>
<div class="t" style="left:738.50px;top:80.40px;font-size:9.4px;color:#5b6369;transform:scaleX(0.9905);"><i></i>Obor</div>
<div class="t" style="left:764.70px;top:80.40px;font-size:9.4px;color:#1e2226;font-weight:bold;transform:scaleX(0.8878);"><i></i>ŠVP</div>
<div class="t" style="left:738.50px;top:95.70px;font-size:9.4px;color:#5b6369;transform:scaleX(0.9435);"><i></i>Třída</div>
<div class="t" style="left:764.70px;top:95.70px;font-size:9.4px;color:#1e2226;font-weight:bold;transform:scaleX(0.9366);"><i></i>8.A</div>
<div class="t" style="left:978.80px;top:80.40px;font-size:9.4px;color:#5b6369;transform:scaleX(0.9613);"><i></i>Číslo v třídním výkazu (ČvTV)</div>
<div class="t" style="left:1104.30px;top:80.40px;font-size:9.4px;color:#1e2226;font-weight:bold;"><i></i>1</div>
<div class="t" style="left:978.80px;top:95.70px;font-size:9.4px;color:#5b6369;transform:scaleX(1.0121);"><i></i>Třídní učitel</div>
<div class="t" style="left:1034.00px;top:95.70px;font-size:9.4px;color:#1e2226;font-weight:bold;transform:scaleX(0.9092);"><i></i>TrKa</div>
<div class="t" style="left:378.70px;top:136.60px;font-size:9.4px;color:#343b41;font-weight:bold;transform:scaleX(0.9439);"><i></i>Osobní údaje</div>
<div class="t" style="left:457.80px;top:136.60px;font-size:9.4px;color:#343b41;font-weight:bold;transform:scaleX(0.9533);"><i></i>Zákonní zástupci</div>
<div class="t" style="left:553.40px;top:136.60px;font-size:9.4px;color:#343b41;font-weight:bold;transform:scaleX(0.9508);"><i></i>Vzdělávání</div>
<div class="t" style="left:623.00px;top:136.60px;font-size:9.4px;color:#343b41;font-weight:bold;transform:scaleX(0.9692);"><i></i>Matrika</div>
<div class="t" style="left:678.60px;top:136.60px;font-size:9.4px;color:#343b41;font-weight:bold;transform:scaleX(0.9549);"><i></i>Poznámky</div>
<div class="t" style="left:746.20px;top:136.60px;font-size:9.4px;color:#343b41;font-weight:bold;transform:scaleX(0.9572);"><i></i>Historie</div>
<div class="t" style="left:802.60px;top:136.60px;font-size:9.4px;color:#343b41;font-weight:bold;transform:scaleX(0.9634);"><i></i>Průběžná klasifikace</div>
<div class="t" style="left:914.90px;top:136.60px;font-size:9.4px;color:#343b41;font-weight:bold;transform:scaleX(0.9415);"><i></i>Hodnocení Komens</div>
<div class="abs" style="left:1021px;top:145px;width:53.900px;height:18px;overflow:hidden;clip-path:inset(0)">
<div class="t" style="left:0;top:-8.40px;font-size:9.400px;font-weight:bold;color:#343b41;transform:scaleX(0.9757)"><i></i>Výchovná opatření</div></div>
<div class="abs" style="left:619.5px;top:161.9px;width:41.10px;height:2.30px;background:#0c9bdc;border-radius:1.200px"></div>
<svg class="abs" style="left:1084.7px;top:150px;width:6px;height:9px" viewBox="0 0 6 9" fill="none" stroke="#2e3338" stroke-width="1" stroke-linecap="round" stroke-linejoin="round" ><path d="M.6 .6 L5.300 4.500 L.6 8.400"/></svg>
<svg class="abs" style="left:1106px;top:149.6px;width:10px;height:8.2px" viewBox="0 0 10 8.200" fill="none" stroke="#23282c" stroke-width="1.3" stroke-linecap="round" stroke-linejoin="round" ><path d="M.2 .9 h9.600 M.2 4.100 h9.600 M.2 7.300 h9.600"/></svg>
<div class="t" style="left:378.70px;top:171.50px;font-size:9.4px;color:#343b41;font-weight:bold;transform:scaleX(0.9595);"><i></i>Speciální potřeby - poznámky</div>
<div class="t" style="left:529.70px;top:171.50px;font-size:9.4px;color:#343b41;font-weight:bold;transform:scaleX(0.9488);"><i></i>Specifické údaje</div>
<div class="t" style="left:623.00px;top:171.50px;font-size:9.4px;color:#343b41;font-weight:bold;transform:scaleX(0.9204);"><i></i>Doporučení ŠPZ</div>
<div class="abs" style="left:623.7px;top:199.1px;width:68.60px;height:2.30px;background:#0c9bdc;border-radius:1.200px"></div>
<div class="abs" style="left:1031px;top:174.800px;width:91px;height:19.600px;border:1.800px solid #f8141b;border-radius:3.200px;background:#fff"></div>
<svg class="abs" style="left:1037.7px;top:181px;width:9px;height:9px" viewBox="0 0 9 9" fill="none" stroke="#2e3338" stroke-width="0.8" stroke-linecap="round" stroke-linejoin="round" ><path d="M4.500 .2 v8.600 M.2 4.500 h8.600"/></svg>
<div class="t" style="left:1052.90px;top:168.00px;font-size:8.7px;color:#1e2226;font-weight:bold;transform:scaleX(0.9021);"><i></i>Nové doporučení</div>
<div class="abs" style="left:368px;top:215px;width:753.50px;height:25.00px;background:#f1f2f4;border-radius:4px"></div>
<div class="t" style="left:373.20px;top:210.70px;font-size:8.4px;color:#3a4147;"><i></i>Datum vydání</div>
<svg class="abs" style="left:431px;top:223px;width:5.4px;height:8.4px" viewBox="0 0 5.400 8.400" fill="none" stroke="#858d94" stroke-width="0.7" stroke-linecap="round" stroke-linejoin="round" ><path d="M.7 3.200 L2.700 .9 L4.700 3.200 M.7 5.200 L2.700 7.500 L4.700 5.200"/></svg>
<div class="t" style="left:491.80px;top:210.70px;font-size:8.4px;color:#3a4147;transform:scaleX(0.9652);"><i></i>Návrh od</div>
<svg class="abs" style="left:532.2px;top:223px;width:5.4px;height:8.4px" viewBox="0 0 5.400 8.400" fill="none" stroke="#858d94" stroke-width="0.7" stroke-linecap="round" stroke-linejoin="round" ><path d="M.7 3.200 L2.700 .9 L4.700 3.200 M.7 5.200 L2.700 7.500 L4.700 5.200"/></svg>
<div class="t" style="left:582.60px;top:210.70px;font-size:8.4px;color:#3a4147;transform:scaleX(0.9819);"><i></i>Konec platnosti</div>
<svg class="abs" style="left:646.4px;top:223px;width:5.4px;height:8.4px" viewBox="0 0 5.400 8.400" fill="none" stroke="#858d94" stroke-width="0.7" stroke-linecap="round" stroke-linejoin="round" ><path d="M.7 3.200 L2.700 .9 L4.700 3.200 M.7 5.200 L2.700 7.500 L4.700 5.200"/></svg>
<div class="t" style="left:711.20px;top:210.70px;font-size:8.4px;color:#3a4147;transform:scaleX(0.9929);"><i></i>Znevýhodnění a podpůrná opatření</div>
<div class="t" style="left:373.30px;top:231.90px;font-size:8.6px;color:#1e2226;transform:scaleX(0.8783);"><i></i>1. 9. 2024</div>
<div class="t" style="left:491.80px;top:231.90px;font-size:8.6px;color:#1e2226;transform:scaleX(0.8809);"><i></i>1. 9. 2024</div>
<div class="t" style="left:582.60px;top:231.90px;font-size:8.6px;color:#1e2226;transform:scaleX(0.8876);"><i></i>31. 8. 2026</div>
<div class="t" style="left:711.20px;top:231.90px;font-size:8.6px;color:#2b3035;transform:scaleX(0.9300);"><i></i><span style="font-weight:bold;color:#15191c;">4T</span>&nbsp;těžké vady řeči</div>
<div class="t" style="left:711.20px;top:249.40px;font-size:8.6px;color:#2b3035;transform:scaleX(0.9386);"><i></i><span style="font-weight:bold;color:#15191c;">7S</span>&nbsp;středně závažné poruchy učení</div>
<div class="t" style="left:711.20px;top:266.90px;font-size:8.7px;color:#15191c;font-weight:bold;transform:scaleX(0.9426);"><i></i>Podpůrná opatření</div>
<div class="t" style="left:711.20px;top:279.80px;font-size:8.6px;color:#2b3035;transform:scaleX(0.9291);"><i></i>04B501A40 Asistent pedaga podle § 5 odst. 3 (úvazek 40 hod.)</div>
<div class="abs" style="left:368px;top:305.2px;width:753.50px;height:0.80px;background:#f2f3f5;"></div>
<div class="abs" style="left:1097.100px;top:262.700px;width:15.100px;height:19px;border:1.800px solid #f8141b;border-radius:3px;background:#fff"></div>
<svg class="abs" style="left:1103.700px;top:269.300px;width:2px;height:7.600px" viewBox="0 0 2 7.600" fill="#3a4046"><circle cx="1" cy=".8" r=".7"/><circle cx="1" cy="3.800" r=".7"/><circle cx="1" cy="6.800" r=".7"/></svg>
<div class="abs" style="left:1042px;top:288.500px;width:71px;height:61.600px;border-radius:5.500px;background:#fff;box-shadow:0 1px 6px rgba(70,80,100,.20),0 0 1px rgba(70,80,100,.18)"></div>
<svg class="abs" style="left:1054.7px;top:301.4px;width:10.5px;height:10.5px" viewBox="0 0 10.500 10.500" fill="none" stroke="#3a4046" stroke-width="0.85" stroke-linecap="round" stroke-linejoin="round" ><path d="M5 1.800 H2.300 a1.500 1.500 0 0 0 -1.500 1.500 v5 a1.500 1.500 0 0 0 1.500 1.500 h5 a1.500 1.500 0 0 0 1.500-1.500 V5.800 M4 6.800 l.4-1.900 4.200-4.300 1.500 1.500 -4.200 4.300z"/></svg>
<div class="t" style="left:1072.30px;top:289.80px;font-size:8.7px;color:#2e3338;font-weight:bold;transform:scaleX(0.9308);"><i></i>Upravit</div>
<svg class="abs" style="left:1055px;top:327.4px;width:9.2px;height:9.8px" viewBox="0 0 9.200 9.800" fill="none" stroke="#c8283a" stroke-width="0.85" stroke-linecap="round" stroke-linejoin="round" ><path d="M.5 .5 h8.200 v1.600 h-8.200z M1.200 2.100 l.7 7.200 h5.400 l.7-7.200"/><path d="M1.800 3.500 l5 5.500 M3.600 2.600 l4.100 4.500 M2 6 l3 3.300" stroke-width=".75"/></svg>
<div class="t" style="left:1072.30px;top:316.10px;font-size:8.7px;color:#c4283a;font-weight:bold;transform:scaleX(0.9093);"><i></i>Smazat</div>
<div class="abs" style="left:355.6px;top:537.6px;width:779.10px;height:0.90px;background:#e9ecef;"></div>
<div class="btn" style="left:370.200px;top:546.200px;width:77.600px;height:25.100px"></div>
<svg class="abs" style="left:381px;top:554.4px;width:8.7px;height:8.7px" viewBox="0 0 8.700 8.700" fill="none" stroke="#3a4046" stroke-width="0.8" stroke-linecap="round" stroke-linejoin="round" ><path d="M.4 .4 L8.300 8.300 M8.300 .4 L.4 8.300"/></svg>
<div class="t" style="left:395.20px;top:541.90px;font-size:8.6px;color:#2e3338;font-weight:bold;transform:scaleX(0.9571);"><i></i>Zavřít detail</div>
<div class="btn" style="left:712.500px;top:546.200px;width:65.200px;height:25.100px"></div>
<svg class="abs" style="left:722px;top:555px;width:9px;height:7.2px" viewBox="0 0 9 7.200" fill="none" stroke="#3a4046" stroke-width="0.8" stroke-linecap="round" stroke-linejoin="round" ><path d="M.3 .5 h8.400 M.3 3.600 h8.400 M.3 6.700 h8.400"/></svg>
<div class="t" style="left:737.00px;top:542.00px;font-size:8.6px;color:#2e3338;font-weight:bold;transform:scaleX(0.8991);"><i></i>Možnosti</div>
<div class="abs" style="left:1031px;top:546px;width:88.20px;height:25.60px;background:#0a87cd;border-radius:4.500px"></div>
<svg class="abs" style="left:1039.6px;top:553.7px;width:11.6px;height:11.4px" viewBox="0 0 11.600 11.400" fill="none" stroke="#fff" stroke-width="0.85" stroke-linecap="round" stroke-linejoin="round" ><path d="M5.500 2.500 H3 a1.500 1.500 0 0 0 -1.500 1.500 v5 a1.500 1.500 0 0 0 1.500 1.500 h5 a1.500 1.500 0 0 0 1.500-1.500 V6.500 M4.700 7.500 l.4-1.900 4.200-4.300 1.500 1.500 -4.200 4.300z M.5 1 l10 10"/></svg>
<div class="t" style="left:1055.80px;top:542.00px;font-size:8.6px;color:#fff;font-weight:bold;transform:scaleX(0.9236);"><i></i>Ukončit editaci</div>
<div class="abs" style="left:0px;top:0px;width:1154.00px;height:1.00px;background:#b5b5b5;z-index:100"></div>
<div class="abs" style="left:0px;top:0px;width:1.00px;height:581.00px;background:#b5b5b5;z-index:100"></div>
<div class="abs" style="left:1152.2px;top:0px;width:1.00px;height:581.00px;background:#bcbcbc;z-index:100"></div>
<div class="abs" style="left:1153.2px;top:0px;width:0.80px;height:581.00px;background:#e4e4e4;z-index:100"></div>
<div class="abs" style="left:0px;top:578px;width:1154.00px;height:1.80px;background:#bdbdbd;z-index:100"></div>
<div class="abs" style="left:0px;top:579.8px;width:1154.00px;height:1.20px;background:#e9eef2;z-index:100"></div>
</div></body></html>
